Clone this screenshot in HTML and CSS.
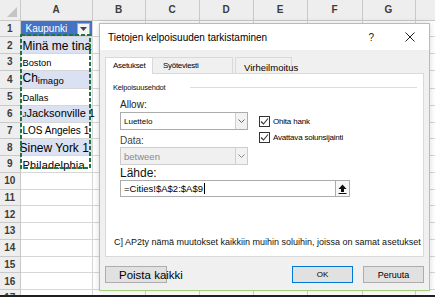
FILE: index.html
```html
<!DOCTYPE html>
<html>
<head>
    <meta charset="UTF-8">
    <title>Tietojen kelpoisuuden tarkistaminen</title>
    <link rel="stylesheet" href="styles.css">
</head>
<body>
<div class="screen">
    <div class="sheet">
        <table class="grid">
            <colgroup>
                <col class="w-row"><col class="w-a"><col class="w-b"><col class="w-c"><col class="w-d">
                <col class="w-e"><col class="w-f"><col class="w-g"><col class="w-h">
            </colgroup>
            <thead>
            <tr>
                <th class="corner"><svg width="12" height="12" viewBox="0 0 12 12"><polygon points="11,1 11,11 1,11" fill="#c4c4c4"/></svg></th>
                <th>A</th><th>B</th><th>C</th><th>D</th><th>E</th><th>F</th><th>G</th><th></th>
            </tr>
            </thead>
            <tbody>
            <tr><th>1</th><td class="title-cell"><div class="title-wrap"><span>Kaupunki</span><i class="filter"><svg width="7" height="4" viewBox="0 0 7 4"><polygon points="0,0 7,0 3.5,4" fill="#444"/></svg></i></div></td><td></td><td></td><td></td><td></td><td></td><td></td><td></td></tr>
            <tr><th>2</th><td class="band t-12">Minä me tina</td><td></td><td></td><td></td><td></td><td></td><td></td><td></td></tr>
            <tr><th>3</th><td class="t-9">Boston</td><td></td><td></td><td></td><td></td><td></td><td></td><td></td></tr>
            <tr><th>4</th><td class="band t-12">Ch<span class="sub">imago</span></td><td></td><td></td><td></td><td></td><td></td><td></td><td></td></tr>
            <tr><th>5</th><td class="t-9">Dallas</td><td></td><td></td><td></td><td></td><td></td><td></td><td></td></tr>
            <tr><th>6</th><td class="band t-11"><span class="tiny">J</span>Jacksonville 1</td><td></td><td></td><td></td><td></td><td></td><td></td><td></td></tr>
            <tr><th>7</th><td class="t-10">LOS Angeles 1</td><td></td><td></td><td></td><td></td><td></td><td></td><td></td></tr>
            <tr><th>8</th><td class="band t-12 pull">Sinew York 1</td><td></td><td></td><td></td><td></td><td></td><td></td><td></td></tr>
            <tr><th>9</th><td class="t-11 wide">Philadelphia</td><td></td><td></td><td></td><td></td><td></td><td></td><td></td></tr>
            <tr><th>10</th><td></td><td></td><td></td><td></td><td></td><td></td><td></td><td></td></tr>
            <tr><th>11</th><td></td><td></td><td></td><td></td><td></td><td></td><td></td><td></td></tr>
            <tr><th>12</th><td></td><td></td><td></td><td></td><td></td><td></td><td></td><td></td></tr>
            <tr><th>13</th><td></td><td></td><td></td><td></td><td></td><td></td><td></td><td></td></tr>
            <tr><th>14</th><td></td><td></td><td></td><td></td><td></td><td></td><td></td><td></td></tr>
            <tr><th>15</th><td></td><td></td><td></td><td></td><td></td><td></td><td></td><td></td></tr>
            <tr><th>16</th><td></td><td></td><td></td><td></td><td></td><td></td><td></td><td></td></tr>
            <tr><th>17</th><td></td><td></td><td></td><td></td><td></td><td></td><td></td><td></td></tr>
            </tbody>
        </table>
    </div>
    <div class="status-line"></div>

    <!-- copy marquee around A2:A9 -->
    <svg class="marquee" width="71" height="135" viewBox="0 0 71 135">
        <rect x="1" y="1" width="69" height="133" fill="none" stroke="#217346" stroke-width="2" stroke-dasharray="4 2"/>
    </svg>

    <div class="dialog">
        <div class="titlebar">
            <span class="title">Tietojen kelpoisuuden tarkistaminen</span>
            <span class="help">?</span>
            <svg class="close" width="10" height="10" viewBox="0 0 10 10">
                <path d="M0.5 0.5 L9.5 9.5 M9.5 0.5 L0.5 9.5" stroke="#222" stroke-width="1"/>
            </svg>
        </div>
        <div class="dlg-body">
            <div class="tabs">
                <div class="tab active">Asetukset</div>
                <div class="tab tab-input">Syöteviesti</div>
                <div class="tab tab-error">Virheilmoitus</div>
            </div>
            <div class="panel">
                <div class="group-head"><span>Kelpoisuusehdot</span><i class="rule"></i></div>
                <div class="criteria">
                    <div class="col-left">
                        <div class="lbl">Allow:</div>
                        <div class="combo">
                            <span class="combo-text">Luettelo</span>
                            <b class="chev"><svg width="7" height="4" viewBox="0 0 7 4"><path d="M0.5 0.5 L3.5 3.5 L6.5 0.5" fill="none" stroke="#666"/></svg></b>
                        </div>
                        <div class="lbl lbl-data">Data:</div>
                        <div class="combo disabled">
                            <span class="combo-text">between</span>
                            <b class="chev"><svg width="7" height="4" viewBox="0 0 7 4"><path d="M0.5 0.5 L3.5 3.5 L6.5 0.5" fill="none" stroke="#888"/></svg></b>
                        </div>
                    </div>
                    <div class="col-right">
                        <div class="check">
                            <i class="box"><svg width="9" height="9" viewBox="0 0 9 9"><path d="M1 4.5 L3.5 7 L8 1.5" fill="none" stroke="#333" stroke-width="1.1"/></svg></i>
                            <span>Ohita hank</span>
                        </div>
                        <div class="check">
                            <i class="box"><svg width="9" height="9" viewBox="0 0 9 9"><path d="M1 4.5 L3.5 7 L8 1.5" fill="none" stroke="#333" stroke-width="1.1"/></svg></i>
                            <span>Avattava solunsijainti</span>
                        </div>
                    </div>
                </div>
                <div class="lbl lbl-source">Lähde:</div>
                <div class="source">
                    <span class="source-text">=Cities!$A$2:$A$9</span><i class="caret"></i>
                    <b class="collapse-btn"><svg width="9" height="10" viewBox="0 0 9 10"><path d="M4.5 0.5 L8.5 5 L6 5 L6 8 L3 8 L3 5 L0.5 5 Z" fill="#111"/><rect x="0.5" y="9" width="8" height="1" fill="#111"/></svg></b>
                </div>
                <p class="note">C] AP2ty nämä muutokset kaikkiin muihin soluihin, joissa on samat asetukset</p>
            </div>
            <div class="buttons">
                <button class="btn btn-clear">Poista kaikki</button>
                <span class="spacer"></span>
                <button class="btn btn-ok">OK</button>
                <button class="btn btn-cancel">Peruuta</button>
            </div>
        </div>
    </div>
</div>
</body>
</html>
```

FILE: styles.css
```css
body {
    margin: 0;
    font-family: "Liberation Sans", Arial, sans-serif;
    background-color: #ffffff;
    overflow: hidden;
}

.screen {
    position: relative;
    width: 435px;
    height: 297px;
    overflow: hidden;
    display: flex;
    flex-direction: column;
}

.sheet {
    height: 295px;
    overflow: hidden;
}

.status-line {
    height: 2px;
    background-color: #1f1f1f;
}

/* spreadsheet grid */
.grid {
    border-collapse: collapse;
    table-layout: fixed;
    width: 470px;
}

.w-row { width: 20px; }
.w-a { width: 72px; }
.w-b { width: 53px; }
.w-c { width: 54px; }
.w-d { width: 54px; }
.w-e { width: 54px; }
.w-f { width: 55px; }
.w-g { width: 53px; }
.w-h { width: 55px; }

.grid th,
.grid td {
    padding: 0;
    border-right: 1px solid #d6d6d6;
    border-bottom: 1px solid #d6d6d6;
    white-space: nowrap;
}

.grid thead tr {
    height: 20px;
}

.grid tbody tr {
    height: 16.75px;
}

.grid th {
    background-color: #eeeeee;
    color: #3c3c3c;
    font-size: 10px;
    font-weight: bold;
    text-align: center;
    border-color: #c9c9c9;
}

.grid th.corner {
    text-align: right;
    vertical-align: bottom;
}

.grid th.corner svg {
    display: block;
    margin: 0 2px 2px auto;
}

.grid td {
    color: #000;
    vertical-align: bottom;
    padding-left: 2px;
    overflow: visible;
    line-height: 14px;
}

.band {
    background-color: #d9e1f2;
}

.title-cell {
    background-color: #4472c4;
}

.title-wrap {
    display: flex;
    align-items: center;
    justify-content: space-between;
    color: #ffffff;
    font-size: 10px;
    padding: 0 2px 0 3px;
}

.filter {
    display: flex;
    align-items: center;
    justify-content: center;
    width: 11px;
    height: 11px;
    background-color: #f4f4f4;
    border: 1px solid #a9a9a9;
}

.t-9 { font-size: 9.3px; }
.t-10 { font-size: 10px; }
.t-11 { font-size: 11px; }
.t-12 { font-size: 12px; }

.sub {
    font-size: 9.5px;
    vertical-align: -2px;
}

.tiny {
    font-size: 8px;
}

.pull {
    text-indent: -3px;
}

.wide {
    letter-spacing: 0.2px;
}

.marquee {
    position: absolute;
    left: 20px;
    top: 34px;
}

/* data validation dialog */
.dialog {
    position: absolute;
    left: 99px;
    top: 23px;
    width: 331px;
    height: 268px;
    box-sizing: border-box;
    border: 1px solid #a6cf7e;
    background-color: #f0f0f0;
    display: flex;
    flex-direction: column;
    box-shadow: 0px 0px 6px rgba(0, 0, 0, 0.15);
}

.titlebar {
    height: 26px;
    background-color: #ffffff;
    display: flex;
    align-items: center;
    padding-left: 8px;
}

.title {
    flex: 1;
    font-size: 10px;
    color: #000;
}

.help {
    font-size: 10px;
    color: #222;
    margin-right: 31px;
}

.close {
    margin-right: 14px;
}

.dlg-body {
    flex: 1;
    display: flex;
    flex-direction: column;
    padding: 7px 5px 0 5px;
}

.tabs {
    display: flex;
    height: 16px;
    position: relative;
    z-index: 1;
}

.tab {
    box-sizing: border-box;
    height: 16px;
    border: 1px solid #d9d9d9;
    border-bottom: none;
    font-size: 8px;
    letter-spacing: -0.3px;
    color: #000;
    line-height: 15px;
}

.tab.active {
    width: 48px;
    height: 17px;
    background-color: #ffffff;
    padding-left: 7px;
}

.tab-input {
    width: 80px;
    border-left: none;
    padding-left: 10px;
}

.tab-error {
    width: 57px;
    margin-left: 2px;
    padding-left: 8px;
    font-size: 9.5px;
    letter-spacing: 0;
    line-height: 19px;
    white-space: nowrap;
}

.panel {
    height: 184px;
    box-sizing: border-box;
    background-color: #ffffff;
    border: 1px solid #d9d9d9;
    display: flex;
    flex-direction: column;
    padding: 8px 6px 8px 7px;
}

.group-head {
    display: flex;
    align-items: center;
    height: 10px;
    font-size: 7.5px;
    letter-spacing: -0.2px;
    color: #111;
}

.rule {
    flex: 1;
    height: 1px;
    margin-left: 25px;
    background-color: #dcdcdc;
}

.criteria {
    display: flex;
    margin: 7px 0 0 7px;
}

.col-left {
    width: 128px;
}

.lbl {
    font-size: 10px;
    line-height: 12px;
    color: #222;
    margin-bottom: 1px;
}

.lbl-data {
    margin: 5px 0 0 0;
    color: #444;
}

.combo {
    height: 18px;
    box-sizing: border-box;
    border: 1px solid #acacac;
    background-color: #ffffff;
    display: flex;
    align-items: center;
}

.combo-text {
    flex: 1;
    padding-left: 3px;
    font-size: 8px;
    color: #000;
}

.combo.disabled {
    background-color: #f0f0f0;
    border-color: #cccccc;
}

.combo.disabled .combo-text {
    font-size: 9.5px;
    color: #8a8a8a;
}

.chev {
    width: 11px;
    height: 100%;
    border-left: 1px solid #cfcfcf;
    background-color: #f2f2f2;
    display: flex;
    align-items: center;
    justify-content: center;
}

.col-right {
    margin-left: 11px;
    padding-top: 14px;
}

.check {
    display: flex;
    align-items: center;
    height: 16px;
    font-size: 8px;
    letter-spacing: -0.2px;
    color: #000;
}

.box {
    width: 11px;
    height: 11px;
    box-sizing: border-box;
    border: 1px solid #333;
    background-color: #fff;
    display: flex;
    align-items: center;
    justify-content: center;
    margin-right: 3px;
}

.lbl-source {
    font-size: 12px;
    line-height: 13px;
    margin: 2px 0 0 7px;
    color: #111;
}

.source {
    width: 230px;
    height: 17px;
    box-sizing: border-box;
    margin-left: 7px;
    border: 1px solid #acacac;
    display: flex;
    align-items: center;
}

.source-text {
    padding-left: 3px;
    font-size: 9.5px;
    color: #000;
}

.caret {
    width: 1px;
    height: 11px;
    background-color: #000;
    margin-left: 1px;
}

.collapse-btn {
    margin-left: auto;
    width: 14px;
    height: 100%;
    box-sizing: border-box;
    border-left: 1px solid #acacac;
    background-color: #f7f7f7;
    display: flex;
    align-items: center;
    justify-content: center;
}

.note {
    margin: auto 0 0 1px;
    font-size: 9px;
    line-height: 11px;
    color: #111;
    white-space: nowrap;
}

.buttons {
    display: flex;
    margin-top: 9px;
    height: 17px;
}

.spacer {
    flex: 1;
}

.btn {
    width: 61px;
    height: 17px;
    box-sizing: border-box;
    border: 1px solid #adadad;
    background-color: #e1e1e1;
    font-family: "Liberation Sans", Arial, sans-serif;
    font-size: 9px;
    color: #000;
    padding: 0;
    overflow: visible;
    white-space: nowrap;
}

.btn-clear {
    width: 62px;
    text-align: left;
    padding-left: 13px;
    font-size: 11.5px;
}

.btn-ok {
    border-color: #0078d7;
    font-size: 8px;
    line-height: 12px;
}

.btn-cancel {
    margin-left: 10px;
}
```
